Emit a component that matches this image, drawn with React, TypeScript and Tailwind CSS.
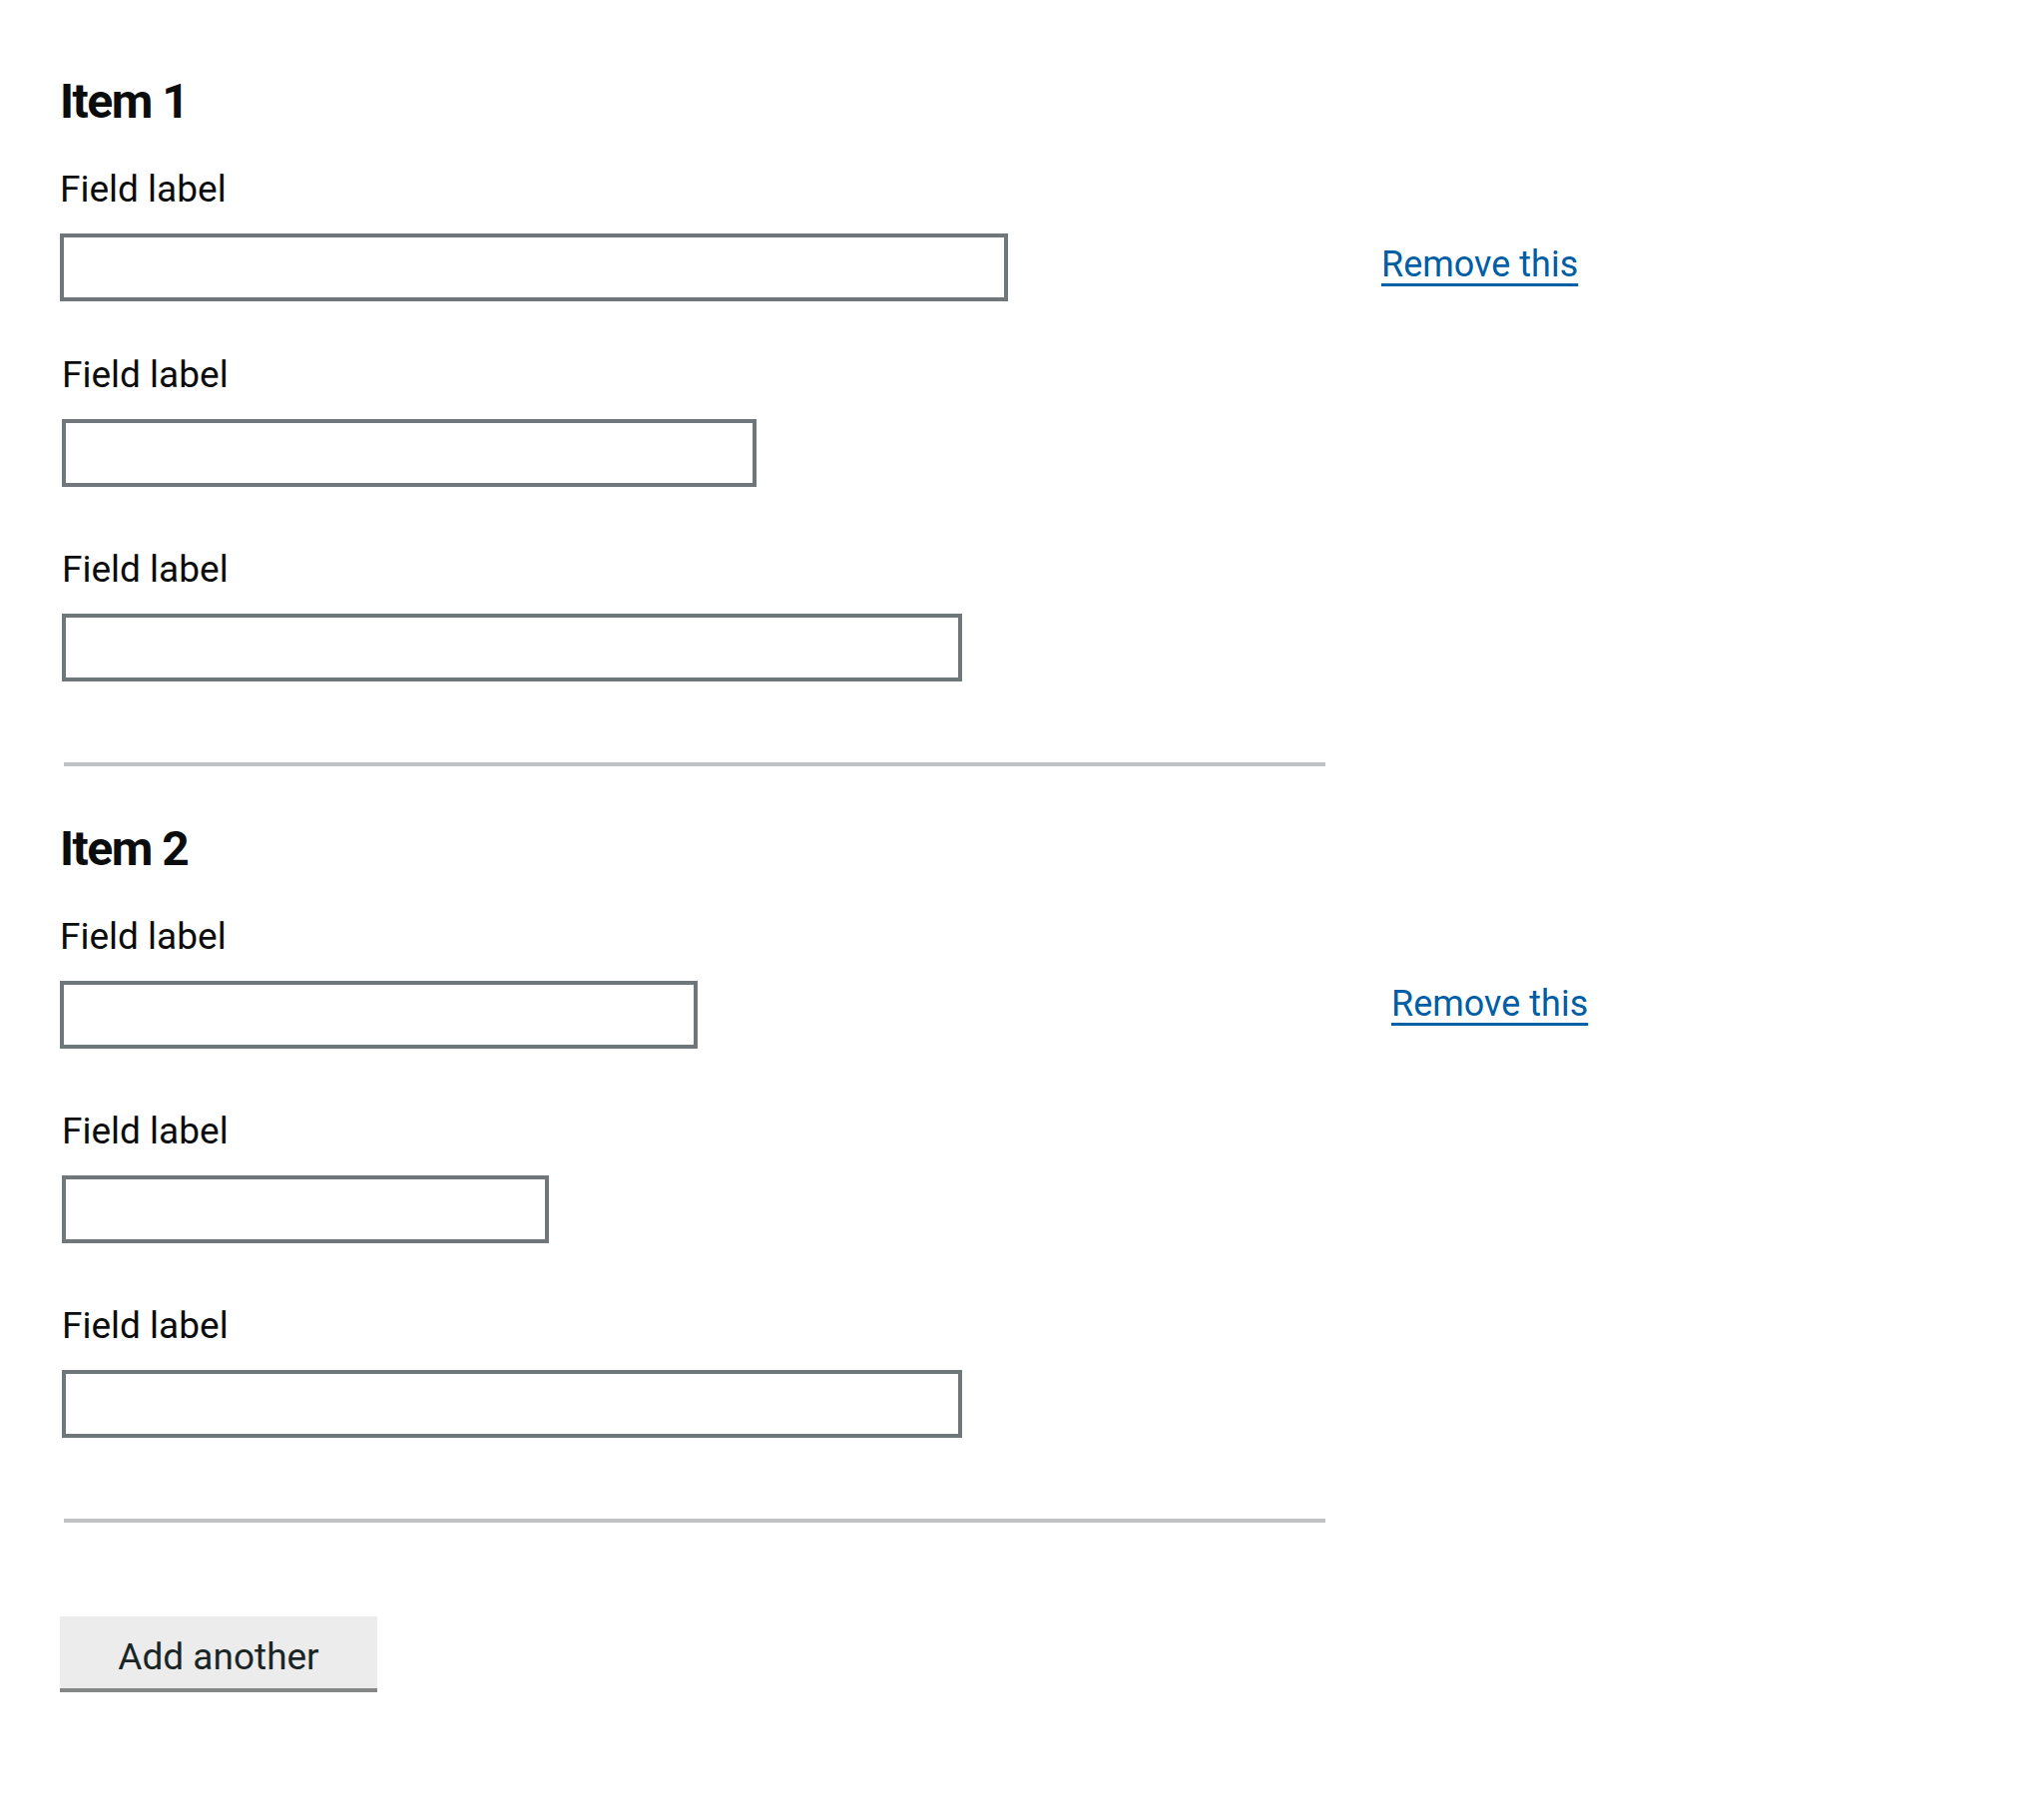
import React from "react";

const font = { fontFamily: "Roboto, 'Noto Sans', Arial, sans-serif" };

function Field({ width, indent, top }: { width: string; indent?: boolean; top: string }) {
  return (
    <div className={top}>
      <label className={"block text-[37px] leading-[44px] text-[#0b0c0c] " + (indent ? "pl-[2px]" : "")}>
        Field label
      </label>
      <input
        type="text"
        className={"mt-[22px] block h-[68px] border-[4px] border-[#6f777b] bg-white outline-none " + width + (indent ? " ml-[2px]" : "")}
      />
    </div>
  );
}

export default function App() {
  return (
    <div className="min-h-[1810px] bg-white pl-[60px] pt-[74px]" style={font}>
      {/* Item 1 */}
      <section>
        <div className="flex">
          <div className="w-[1324px]">
            <h2 className="text-[48px] font-bold leading-[56px] tracking-[-1.5px] text-[#0b0c0c]">Item 1</h2>
            <Field top="mt-[38px]" width="w-[950px]" />
            <Field top="mt-[52px]" width="w-[696px]" indent />
            <Field top="mt-[61px]" width="w-[902px]" indent />
          </div>
          <div className="pt-[169px]">
            <a href="#" className="text-[36px] leading-[44px] text-[#005ea5] underline decoration-[2.5px] underline-offset-[7px]">
              Remove this
            </a>
          </div>
        </div>
        <hr className="ml-[4px] mt-[81px] w-[1264px] border-0 border-t-[4px] border-[#bfc1c3]" />
      </section>

      {/* Item 2 */}
      <section className="mt-[55px]">
        <div className="flex">
          <div className="w-[1334px]">
            <h2 className="text-[48px] font-bold leading-[56px] tracking-[-1.5px] text-[#0b0c0c]">Item 2</h2>
            <Field top="mt-[38px]" width="w-[639px]" />
            <Field top="mt-[61px]" width="w-[488px]" indent />
            <Field top="mt-[61px]" width="w-[902px]" indent />
          </div>
          <div className="pt-[161px]">
            <a href="#" className="text-[36px] leading-[44px] text-[#005ea5] underline decoration-[2.5px] underline-offset-[7px]">
              Remove this
            </a>
          </div>
        </div>
        <hr className="ml-[4px] mt-[81px] w-[1264px] border-0 border-t-[4px] border-[#bfc1c3]" />
      </section>

      <button
        type="button"
        className="mt-[94px] block w-[318px] bg-[#ececec] pb-[9px] pt-[19px] text-center text-[37px] leading-[44px] text-[#1a2626] shadow-[0_4px_0_#858686]"
      >
        Add another
      </button>
    </div>
  );
}
